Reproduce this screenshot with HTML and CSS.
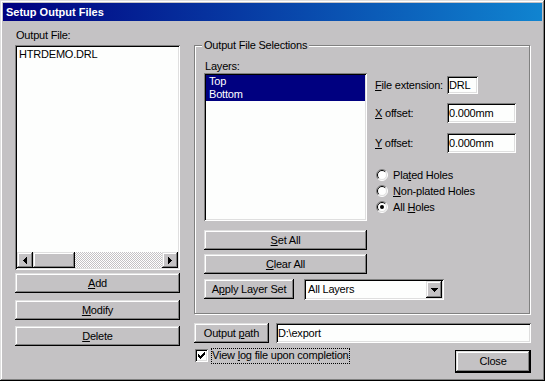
FILE: index.html
```html
<!DOCTYPE html>
<html lang="en">
<head>
  <meta charset="UTF-8" />
  <title>Setup Output Files</title>
  <link rel="stylesheet" href="styles.css">
</head>
<body>
  <div class="window">
    <div class="titlebar"><span class="title">Setup Output Files</span></div>

    <div class="dialog-body">
      <div class="left-col">
        <div class="lbl">Output File:</div>
        <div class="listbox files">
          <div class="items">
            <div class="item">HTRDEMO.DRL</div>
          </div>
          <div class="hscroll">
            <span class="sb-btn">
              <svg width="4" height="7" viewBox="0 0 4 7"><path d="M0 3h1v1H0z M1 2h1v3H1z M2 1h1v5H2z M3 0h1v7H3z" fill="#000"/></svg>
            </span>
            <span class="sb-thumb"></span>
            <span class="sb-track"></span>
            <span class="sb-btn">
              <svg width="4" height="7" viewBox="0 0 4 7"><path d="M3 3h1v1H3z M2 2h1v3H2z M1 1h1v5H1z M0 0h1v7H0z" fill="#000"/></svg>
            </span>
          </div>
        </div>
        <button class="btn side-btn add"><u>A</u>dd</button>
        <button class="btn side-btn modify"><u>M</u>odify</button>
        <button class="btn side-btn delete"><u>D</u>elete</button>
      </div>

      <div class="right-col">
        <fieldset class="group">
          <legend>Output File Selections</legend>
          <div class="group-top">
            <div class="layers-col">
              <div class="lbl">Layers:</div>
              <div class="listbox layers">
                <div class="item sel">Top</div>
                <div class="item sel">Bottom</div>
              </div>
              <button class="btn set-all"><u>S</u>et All</button>
              <button class="btn clear-all"><u>C</u>lear All</button>
            </div>

            <div class="opts-col">
              <div class="field-row ext-row">
                <span class="field-label"><u>F</u>ile extension:</span>
                <div class="field ext">DRL</div>
              </div>
              <div class="field-row x-row">
                <span class="field-label"><u>X</u> offset:</span>
                <div class="field offset">0.000mm</div>
              </div>
              <div class="field-row y-row">
                <span class="field-label"><u>Y</u> offset:</span>
                <div class="field offset">0.000mm</div>
              </div>

              <div class="radios">
                <div class="radio-row">
                  <svg class="radio" width="12" height="12" viewBox="0 0 12 12">
                    <circle cx="6" cy="6" r="5" fill="#fff"/>
                    <path d="M2.1 9.9A5.5 5.5 0 0 1 9.9 2.1" stroke="#808080" fill="none"/>
                    <path d="M9.9 2.1A5.5 5.5 0 0 1 2.1 9.9" stroke="#fff" fill="none"/>
                    <path d="M2.8 9.2A4.5 4.5 0 0 1 9.2 2.8" stroke="#000" fill="none"/>
                    <path d="M9.2 2.8A4.5 4.5 0 0 1 2.8 9.2" stroke="#dfdfdf" fill="none"/>
                  </svg>
                  <span>Pla<u>t</u>ed Holes</span>
                </div>
                <div class="radio-row">
                  <svg class="radio" width="12" height="12" viewBox="0 0 12 12">
                    <circle cx="6" cy="6" r="5" fill="#fff"/>
                    <path d="M2.1 9.9A5.5 5.5 0 0 1 9.9 2.1" stroke="#808080" fill="none"/>
                    <path d="M9.9 2.1A5.5 5.5 0 0 1 2.1 9.9" stroke="#fff" fill="none"/>
                    <path d="M2.8 9.2A4.5 4.5 0 0 1 9.2 2.8" stroke="#000" fill="none"/>
                    <path d="M9.2 2.8A4.5 4.5 0 0 1 2.8 9.2" stroke="#dfdfdf" fill="none"/>
                  </svg>
                  <span><u>N</u>on-plated Holes</span>
                </div>
                <div class="radio-row">
                  <svg class="radio" width="12" height="12" viewBox="0 0 12 12">
                    <circle cx="6" cy="6" r="5" fill="#fff"/>
                    <path d="M2.1 9.9A5.5 5.5 0 0 1 9.9 2.1" stroke="#808080" fill="none"/>
                    <path d="M9.9 2.1A5.5 5.5 0 0 1 2.1 9.9" stroke="#fff" fill="none"/>
                    <path d="M2.8 9.2A4.5 4.5 0 0 1 9.2 2.8" stroke="#000" fill="none"/>
                    <path d="M9.2 2.8A4.5 4.5 0 0 1 2.8 9.2" stroke="#dfdfdf" fill="none"/>
                    <circle cx="6" cy="6" r="2" fill="#000"/>
                  </svg>
                  <span>All <u>H</u>oles</span>
                </div>
              </div>
            </div>
          </div>

          <div class="apply-row">
            <button class="btn apply">A<u>p</u>ply Layer Set</button>
            <div class="combo">
              <span class="combo-text">All Layers</span>
              <span class="combo-btn">
                <svg width="7" height="4" viewBox="0 0 7 4"><path d="M0 0h7v1H0z M1 1h5v1H1z M2 2h3v1H2z M3 3h1v1H3z" fill="#000"/></svg>
              </span>
            </div>
          </div>
        </fieldset>

        <div class="path-row">
          <button class="btn path-btn">Output <u>p</u>ath</button>
          <div class="field path">D:\export</div>
        </div>

        <div class="bottom-row">
          <span class="checkbox">
            <svg width="7" height="7" viewBox="0 0 7 7"><path d="M6 0h1v3H6z M5 1h1v3H5z M4 2h1v3H4z M3 3h1v3H3z M2 4h1v3H2z M1 3h1v3H1z M0 2h1v3H0z" fill="#000"/></svg>
          </span>
          <span class="check-label">View <u>l</u>og file upon completion</span>
          <button class="btn close">Close</button>
        </div>
      </div>
    </div>
  </div>
</body>
</html>
```

FILE: styles.css
```css
* {
  margin: 0; padding: 0; box-sizing: border-box;
}

body {
  background: #fff;
  font-family: "Liberation Sans", Arial, sans-serif;
  font-size: 11px;
  line-height: 13px;
  letter-spacing: -0.2px;
  color: #000;
}

.window {
  width: 545px;
  height: 381px;
  padding: 3px;
  background: #c4c2c4;
  box-shadow: inset -1px -1px #000, inset 1px 1px #dfdfdf,
              inset -2px -2px #808080, inset 2px 2px #fff;
}

.titlebar {
  height: 18px;
  padding-left: 3px;
  display: flex;
  align-items: center;
  background: linear-gradient(to right, #000080, #1084d0);
  color: #fff;
  font-weight: bold;
  letter-spacing: 0;
}

.dialog-body {
  display: flex;
  gap: 14px;
  padding: 8px 0 0 12px;
}

/* left column */
.left-col {
  width: 165px;
  display: flex;
  flex-direction: column;
}

.lbl {
  padding-left: 1px;
}

.listbox {
  background: #fdfefd;
  padding: 2px;
  box-shadow: inset 1px 1px #808080, inset -1px -1px #fff,
              inset 2px 2px #000, inset -2px -2px #dfdfdf;
}

.files {
  margin-top: 3px;
  height: 225px;
  display: flex;
  flex-direction: column;
}

.files .items {
  flex: 1;
  padding: 1px 0 0 2px;
}

.hscroll {
  height: 16px;
  display: flex;
}

.sb-btn, .sb-thumb, .btn, .combo-btn {
  background: #c4c2c4;
  box-shadow: inset -1px -1px #000, inset 1px 1px #dfdfdf,
              inset -2px -2px #808080, inset 2px 2px #fff;
}

.sb-btn {
  width: 16px;
  height: 16px;
  display: flex;
  align-items: center;
  justify-content: center;
}

.sb-thumb {
  width: 42px;
}

.sb-track {
  flex: 1;
  background: repeating-conic-gradient(#c4c2c4 0 25%, #fff 0 50%) 0 0 / 2px 2px;
}

.btn {
  height: 20px;
  border: none;
  font: inherit;
  letter-spacing: inherit;
  color: #000;
  text-align: center;
}

.add { margin-top: 3px; }
.modify { margin-top: 7px; }
.delete { margin-top: 6px; }

/* right column */
.right-col {
  width: 337px;
  display: flex;
  flex-direction: column;
}

.group {
  width: 336px;
  margin-top: 10px;
  padding: 8px 8px 13px 9px;
  border: 1px solid #808080;
  background: #c4c2c4;
  box-shadow: inset 1px 1px #fff, 1px 1px #fff;
}

.group legend {
  padding: 0 2px;
  margin-left: -2px;
  background: #c4c2c4;
}

.group-top {
  display: flex;
  gap: 8px;
}

.layers-col {
  width: 163px;
  display: flex;
  flex-direction: column;
}

.layers {
  height: 148px;
}

.layers .item {
  height: 13px;
  padding-left: 3px;
}

.layers .sel {
  background: #000080;
  color: #fff;
}

.set-all { margin-top: 9px; }
.clear-all { margin-top: 4px; }

.opts-col {
  display: flex;
  flex-direction: column;
}

.field-row {
  display: flex;
  align-items: center;
}

.field-label {
  width: 72px;
}

.ext-row { margin-top: 16px; }
.x-row { margin-top: 9px; }
.y-row { margin-top: 10px; }

.field {
  height: 20px;
  padding: 0 2px;
  display: flex;
  align-items: center;
  background: #fdfefd;
  box-shadow: inset 1px 1px #808080, inset -1px -1px #fff,
              inset 2px 2px #000, inset -2px -2px #dfdfdf;
}

.ext {
  width: 31px;
  height: 18px;
}

.offset {
  width: 69px;
}

.radios {
  margin-top: 14px;
}

.radio-row {
  height: 16px;
  display: flex;
  align-items: center;
  gap: 5px;
}

.radio {
  margin-left: 1px;
}

.apply-row {
  margin-top: 5px;
  display: flex;
  gap: 10px;
}

.apply {
  width: 90px;
}

.combo {
  width: 140px;
  height: 21px;
  padding: 2px;
  display: flex;
  background: #fdfefd;
  box-shadow: inset 1px 1px #808080, inset -1px -1px #fff,
              inset 2px 2px #000, inset -2px -2px #dfdfdf;
}

.combo-text {
  flex: 1;
  padding: 2px 0 0 2px;
}

.combo-btn {
  width: 16px;
  height: 17px;
  display: flex;
  align-items: center;
  justify-content: center;
}

.path-row {
  margin-top: 9px;
  display: flex;
  gap: 7px;
}

.path-btn {
  width: 75px;
}

.path {
  width: 255px;
}

.bottom-row {
  display: flex;
  align-items: flex-start;
}

.checkbox {
  width: 13px;
  height: 13px;
  margin: 6px 0 0 1px;
  display: flex;
  align-items: center;
  justify-content: center;
  background: #fdfefd;
  box-shadow: inset 1px 1px #808080, inset -1px -1px #fff,
              inset 2px 2px #000, inset -2px -2px #dfdfdf;
}

.check-label {
  margin: 5px 0 0 3px;
  height: 16px;
  padding: 1px 1px 0 1px;
  outline: 1px dotted #000;
  outline-offset: -1px;
}

.close {
  width: 76px;
  height: 23px;
  margin: 7px 0 0 auto;
  box-shadow: inset -2px -2px #000, inset 1px 1px #000,
              inset 2px 2px #dfdfdf, inset -3px -3px #808080,
              inset 3px 3px #fff;
}
```
